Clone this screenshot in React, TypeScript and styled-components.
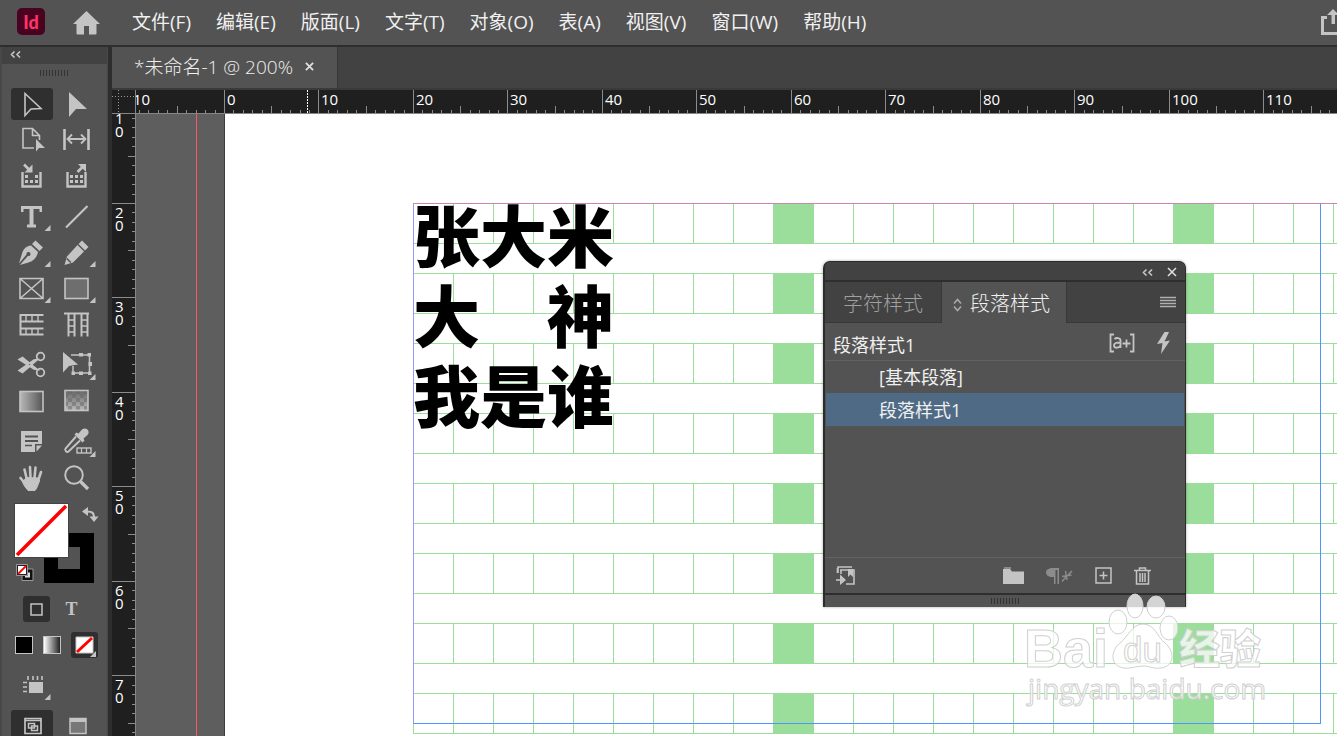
import React, { useEffect, useState } from "react";
import styled, { createGlobalStyle } from "styled-components";

const LATIN = `"Open Sans", "Noto Sans CJK SC", sans-serif`;
const INK = "#c4c4c4";
const GREEN = "#9bdd9b";

const GlobalStyle = createGlobalStyle`
  * { box-sizing: border-box; }
  body { margin: 0; background: #535353; font-family: ${LATIN}; color: #f0f0f0; }
  button { margin: 0; padding: 0; border: 0; background: none; color: inherit; font: inherit; }
  svg { display: block; flex: none; }
`;

const Shell = styled.div`
  display: flex;
  flex-direction: column;
  height: 100vh;
  overflow: hidden;
`;

/* ---------- menu bar ---------- */
const MenuBar = styled.header`
  display: flex;
  align-items: center;
  flex: none;
  height: 45px;
  padding: 0 0 2px 17px;
  overflow: hidden;
`;
const AppLogo = styled.div`
  display: flex;
  align-items: center;
  justify-content: center;
  width: 28px;
  height: 27px;
  border-radius: 5px;
  background: #49021f;
  color: #ff3366;
  font: 900 18px/24px Lato, sans-serif;
  flex: none;
`;
const HomeButton = styled.button`
  margin: 2px 20px 0 28px;
`;
const MenuList = styled.nav`
  display: flex;
`;
const MenuItem = styled.button`
  padding: 0 13px 0 12px;
  font-size: 19px;
  line-height: 28px;
  white-space: nowrap;
`;
const ShareButton = styled.button`
  margin-left: auto;
`;

/* ---------- tool bar ---------- */
const Body = styled.div`
  display: flex;
  flex: 1;
  min-height: 0;
  border-top: 2px solid #2e2e2e;
`;
const ToolBar = styled.aside`
  flex: none;
  width: 108px;
  border-left: 2px solid #484848;
  border-right: 1px solid #484848;
  background: #535353;
  overflow: hidden;
`;
const ToolHeader = styled.button`
  display: flex;
  align-items: center;
  width: 100%;
  height: 17px;
  padding: 0 0 2px 8px;
  background: #424242;
`;
const Grip = styled.div<{ $h: number }>`
  display: flex;
  align-items: center;
  justify-content: center;
  height: ${(p) => p.$h}px;
  &::before {
    content: "";
    width: 29px;
    height: 6px;
    background: repeating-linear-gradient(to right, #333 0 1px, transparent 1px 3px);
  }
`;
const ToolGroups = styled.div`
  display: flex;
  flex-direction: column;
  gap: 9px;
  padding: 7px 9px 0;
`;
const ToolGroup = styled.div`
  display: grid;
  grid-template-columns: 42px 42px;
  gap: 4px 3px;
`;
const ToolButton = styled.button<{ $on?: boolean }>`
  width: 42px;
  height: 32px;
  border-radius: 3px;
  background: ${(p) => (p.$on ? "#2f2f2f" : "transparent")};
`;

const Swatches = styled.div`
  position: relative;
  height: 94px;
`;
const StrokeSwatch = styled.button`
  position: absolute;
  left: 42px;
  top: 38px;
  width: 50px;
  height: 50px;
  border: 14px solid #000;
  background: #535353;
`;
const FillSwatch = styled.button`
  position: absolute;
  left: 12px;
  top: 8px;
  width: 55px;
  height: 55px;
  border: 1px solid #444;
  background: #fff;
`;
const SwapButton = styled.button`
  position: absolute;
  left: 80px;
  top: 11px;
`;
const DefaultsButton = styled.button`
  position: absolute;
  left: 14px;
  top: 69px;
`;
const SwatchRow = styled.div<{ $pad: number; $gap: number; $top: number }>`
  display: flex;
  align-items: center;
  gap: ${(p) => p.$gap}px;
  padding: ${(p) => p.$top}px 0 0 ${(p) => p.$pad}px;
`;
const SmallButton = styled.button<{ $on?: boolean }>`
  display: flex;
  align-items: center;
  justify-content: center;
  width: 27px;
  height: 26px;
  border-radius: 3px;
  background: ${(p) => (p.$on ? "#2f2f2f" : "transparent")};
  color: ${INK};
  font: 700 18px/26px "Liberation Serif", serif;
`;
const ColorChip = styled.button<{ $bg: string }>`
  width: 18px;
  height: 18px;
  border: 1px solid ${INK};
  background: ${(p) => p.$bg};
`;

/* ---------- document area ---------- */
const DocumentArea = styled.main`
  display: flex;
  flex-direction: column;
  flex: 1;
  min-width: 0;
  border-left: 4px solid #2e2e2e;
`;
const TabStrip = styled.div`
  display: flex;
  flex: none;
  height: 43px;
  background: #424242;
  border-bottom: 2px solid #3a3a3a;
`;
const DocTab = styled.div`
  display: flex;
  align-items: center;
  gap: 12px;
  padding: 0 23px 3px 22px;
  border-right: 1px solid #383838;
  background: #535353;
  font-size: 19px;
  font-weight: 300;
  white-space: nowrap;
`;
const Workspace = styled.div`
  display: grid;
  grid-template-columns: 24px minmax(0, 1fr);
  grid-template-rows: 24px minmax(0, 1fr);
  flex: 1;
  min-height: 0;
`;
const RulerBox = styled.div<{ $side?: boolean }>`
  background: #1f1f1f;
  overflow: hidden;
  border-bottom: ${(p) => (p.$side ? 0 : 1)}px solid #868686;
  border-right: ${(p) => (p.$side ? 1 : 0)}px solid #868686;
  svg text { font: 15px "Open Sans", sans-serif; fill: #fff; }
`;
const Corner = styled.div`
  background: #1f1f1f;
  border-right: 1px solid #868686;
  border-bottom: 1px solid #868686;
`;
const Canvas = styled.div`
  position: relative;
  display: flex;
  overflow: hidden;
  background: #5e5e5e;
`;
const Pasteboard = styled.div`
  flex: none;
  width: 89px;
  padding-left: 60px;
  border-right: 1px solid #3c3c3c;
  &::before { content: ""; display: block; width: 1px; height: 100%; background: #ff5266; }
`;
const Page = styled.div`
  flex: 1;
  min-width: 0;
  padding: 89px 0 0 188px;
  background: #fff;
  overflow: hidden;
`;
/* The text frame stacks its character grid, margin guides and story. */
const Frame = styled.div`
  display: grid;
  grid-template-columns: minmax(0, 1fr);
  & > * { grid-area: 1 / 1; }
`;
const CharGrid = styled.div`
  display: flex;
  flex-direction: column;
  gap: 29px;
`;
const CharRow = styled.div`
  height: 41px;
  border: solid ${GREEN};
  border-width: 1px 0 1px 1px;
  background:
    repeating-linear-gradient(to right, transparent 0 359px, ${GREEN} 359px 400px),
    repeating-linear-gradient(to right, transparent 0 39px, ${GREEN} 39px 40px);
`;
const Guides = styled.div`
  width: 908px;
  height: 521px;
  border: 1px solid #4d94ff;
  border-top-color: #cc85ad;
  border-left-color: #9999f5;
`;
const TopGuide = styled.div`
  height: 1px;
  background: #cc85ad;
`;
const Story = styled.div`
  color: #000;
  font: 900 67px/80px "Noto Sans CJK SC", sans-serif;
  white-space: pre;
  margin-top: -10px;
  p { margin: 0; }
`;

/* ---------- floating panel ---------- */
const Panel = styled.section`
  position: absolute;
  left: 687px;
  top: 147px;
  width: 363px;
  border: solid #2c2c2c;
  border-width: 1px 1px 0 2px;
  border-radius: 7px 7px 0 0;
  background: #535353;
  box-shadow: 0 0 3px rgba(0, 0, 0, 0.35);
  overflow: hidden;
`;
const PanelTop = styled.div`
  display: flex;
  align-items: center;
  justify-content: flex-end;
  gap: 14px;
  height: 20px;
  padding-right: 8px;
  padding-top: 2px;
  border-bottom: 2px solid #2e2e2e;
  background: #424242;
`;
const PanelTabs = styled.div`
  display: flex;
  height: 41px;
  background: #424242;
`;
const PanelTab = styled.button<{ $on?: boolean }>`
  display: flex;
  align-items: center;
  gap: 8px;
  padding: ${(p) => (p.$on ? "0 16px 0 11px" : "0 18px 0 18px")};
  background: ${(p) => (p.$on ? "#535353" : "#424242")};
  border-right: 1px solid #383838;
  border-bottom: ${(p) => (p.$on ? 0 : 1)}px solid #383838;
  color: ${(p) => (p.$on ? "#f0f0f0" : "#a0a0a0")};
  font-size: 20px;
  font-weight: 300;
  white-space: nowrap;
  svg { margin-top: 4px; }
`;
const PanelMenu = styled.button`
  display: flex;
  flex: 1;
  align-items: center;
  justify-content: flex-end;
  padding-right: 9px;
  border-bottom: 1px solid #383838;
`;
const CurrentStyle = styled.div`
  display: flex;
  align-items: center;
  gap: 21px;
  height: 38px;
  padding: 2px 14px 0 8px;
  border-bottom: 1px solid #626262;
  font-size: 18px;
  span { flex: 1; padding-top: 2px; }
`;
const StyleList = styled.div`
  height: 196px;
  padding: 0 1px;
`;
const StyleRow = styled.button<{ $on?: boolean }>`
  display: block;
  width: 100%;
  height: 32px;
  padding-left: 53px;
  background: ${(p) => (p.$on ? "#4e6a85" : "transparent")};
  font-size: 18px;
  line-height: 33px;
  text-align: left;
  & + & { height: 33px; line-height: 35px; }
`;
const PanelFooter = styled.footer`
  display: flex;
  align-items: center;
  height: 38px;
  padding: 0 34px 0 10px;
  border-top: 1px solid #626262;
  border-bottom: 2px solid #2e2e2e;
  gap: 22px;
  button:first-child { margin-right: auto; }
`;

const Watermark = styled.div`
  position: absolute;
  right: 66px;
  bottom: 22px;
  svg text { fill: #fff; fill-opacity: 0.75; stroke: #d0d0d0; stroke-width: 1; }
`;

/* ---------- drawings ---------- */
type ToolProps = { label: string; on?: boolean; more?: boolean; children: React.ReactNode };
const Tool = ({ label, on, more, children }: ToolProps) => (
  <ToolButton $on={on} aria-label={label} title={label}>
    <svg width="42" height="32" viewBox="0 0 42 32" fill="none" stroke={INK} strokeWidth="2">
      {children}
      {more && <path d="M39.500 24v6h-6z" fill={INK} stroke="none" />}
    </svg>
  </ToolButton>
);

const Chevrons = () => (
  <svg width="11" height="7" viewBox="0 0 11 7" fill="none" stroke={INK} strokeWidth="1.6">
    <path d="M4.500 .5l-3 3 3 3M10 .5l-3 3 3 3" />
  </svg>
);

const Cross = ({ size, weight = 2 }: { size: number; weight?: number }) => (
  <svg width={size} height={size} viewBox="0 0 10 10" stroke="#e0e0e0" strokeWidth={weight}>
    <path d="M1 1l8 8M9 1l-8 8" />
  </svg>
);

const dots = (cols: number[], y: number) =>
  cols.map((x) => <rect key={`${x}-${y}`} x={x} y={y} width="3" height="3" fill={INK} stroke="none" />);

const PX_PER_MM = 9.448;

const useWindowSize = () => {
  const read = () => ({ width: window.innerWidth, height: window.innerHeight });
  const [size, setSize] = useState(read);
  useEffect(() => {
    const update = () => setSize(read());
    window.addEventListener("resize", update);
    return () => window.removeEventListener("resize", update);
  }, []);
  return size;
};

const HorizontalRuler = () => {
  const { width } = useWindowSize();
  const at = (mm: number) => Math.round(88 + mm * PX_PER_MM);
  const visible = Math.max(0, width - 136);
  const ticks = Array.from({ length: Math.ceil(visible / PX_PER_MM) + 1 }, (_, i) => i - 10).filter((mm) => at(mm) < visible);
  return (
    <svg width="100%" height="23" shapeRendering="crispEdges">
      {ticks.map((mm) => (
        <rect key={mm} x={at(mm)} y={mm % 10 === 0 ? 0 : mm % 5 === 0 ? 16 : 20} width="1" height="23" fill="#8c8c8c" />
      ))}
      {ticks.filter((mm) => mm % 10 === 0).map((mm) => (
        <text key={mm} x={at(mm) + 3} y="15">{Math.abs(mm)}</text>
      ))}
      <path d="M171.500 0v23" stroke="#fff" strokeDasharray="2 1" />
    </svg>
  );
};

const VerticalRuler = () => {
  const { height } = useWindowSize();
  const at = (mm: number) => Math.round(89 + (mm - 20) * PX_PER_MM);
  const visible = Math.max(0, height - 114);
  const ticks = Array.from({ length: Math.ceil(visible / PX_PER_MM) + 1 }, (_, i) => i + 10).filter((mm) => at(mm) < visible);
  return (
    <svg width="23" height="100%" shapeRendering="crispEdges">
      {ticks.map((mm) => (
        <rect key={mm} x={mm % 10 === 0 ? 0 : mm % 5 === 0 ? 16 : 20} y={at(mm)} width="23" height="1" fill="#8c8c8c" />
      ))}
      {ticks.filter((mm) => mm % 10 === 0).map((mm) =>
        String(mm).split("").map((d, i) => (
          <text key={`${mm}-${i}`} x="3" y={at(mm) + 15 + i * 13}>{d}</text>
        ))
      )}
    </svg>
  );
};

const Tools = () => (
  <ToolGroups>
    <ToolGroup>
      <Tool label="选择工具" on><path d="M14 5.500v22l6-6.500 10-.5z" strokeWidth="1.600" /></Tool>
      <Tool label="直接选择工具"><path d="M13 4v25l7-8h11z" fill={INK} stroke="none" /></Tool>
      <Tool label="页面工具">
        <path d="M23 24H12V4.500h9.500l7 7V16M21.500 4.500v7h7" strokeWidth="1.600" />
        <path d="M25 15v12.500l3-3.500h6z" fill={INK} stroke="none" />
      </Tool>
      <Tool label="间隙工具">
        <path d="M8.500 5v21M32.500 5v21" strokeWidth="2.600" />
        <path d="M13 15h15M16 10.500L11.500 15l4.500 4.500M25 10.500l4.500 4.500-4.500 4.500" strokeWidth="1.800" />
      </Tool>
      <Tool label="内容收集器工具">
        <path d="M11.500 12v14.500h18V12" strokeWidth="2.400" />
        <path d="M13 4.500l5 5" strokeWidth="2.600" /><path d="M21.500 4.500v8h-8z" fill={INK} stroke="none" />
        {dots([14, 24], 15)}{dots([14, 19, 24], 20)}
      </Tool>
      <Tool label="内容置入器工具">
        <path d="M11.500 12v14.500h18V12" strokeWidth="2.400" />
        <path d="M21.500 12l5-5" strokeWidth="2.600" /><path d="M22 4h8v8z" fill={INK} stroke="none" />
        {dots([14, 19, 24], 15)}{dots([14, 19, 24], 20)}
      </Tool>
    </ToolGroup>
    <ToolGroup>
      <Tool label="文字工具" more>
        <path d="M10 5h21v6h-2.500V8H22.500v15.500H25V26.500h-9V23.500h2.500V8H12.500v3H10z" fill={INK} stroke="none" />
      </Tool>
      <Tool label="直线工具"><path d="M10 26.500L31.500 5" strokeWidth="2.200" /></Tool>
      <Tool label="钢笔工具" more>
        <path d="M24.500 3.500l7.500 7-3.500 3.500-7.500-7z" fill={INK} stroke="none" />
        <path d="M20 8.500l7 6.500c-1 5-4 9-9.500 10.500L9 28c0-.500 8-9 8-9a2 2 0 1 0-1.500-1.500L8 26.500l3-10c1.500-5 4.500-7.500 9-8z" fill={INK} stroke="none" />
      </Tool>
      <Tool label="铅笔工具" more>
        <path d="M26 3.500l6.500 6.500-3.500 3.500-6.500-6.500z" fill={INK} stroke="none" />
        <path d="M21.500 8l6.500 6.500L17 25.500l-8.500 2.500L11 19.500z" fill={INK} stroke="none" />
        <path d="M10.800 21.500l4 4" stroke="#535353" strokeWidth="1.500" />
      </Tool>
      <Tool label="矩形框架工具" more>
        <path d="M9 5.500h23v20H9zM9 5.500l23 20M32 5.500l-23 20" strokeWidth="1.600" />
      </Tool>
      <Tool label="矩形工具" more><rect x="9" y="5.500" width="23" height="20" fill="#6e6e6e" strokeWidth="1.600" /></Tool>
      <Tool label="水平网格工具">
        <path d="M9.500 5v21M8.500 6h24M8.500 12.500h24M8.500 19.500h24M8.500 25.500h24" />
        <path d="M15 6v6M21 6v6M27 6v6M15 19v6M21 19v6M27 19v6" strokeWidth="1.400" />
      </Tool>
      <Tool label="垂直网格工具">
        <path d="M8 4.500h25M12.500 4v23.500M18.500 4v23.500M25.500 4v23.500M31.500 4v23.500" />
        <path d="M12 11h6M12 17h6M12 23h6M25 11h6M25 17h6M25 23h6" strokeWidth="1.400" />
      </Tool>
    </ToolGroup>
    <ToolGroup>
      <Tool label="剪刀工具">
        <circle cx="29.500" cy="6.500" r="3.800" strokeWidth="1.800" /><circle cx="29.500" cy="22.500" r="3.800" strokeWidth="1.800" />
        <path d="M8 9.500l3.500-2L26.500 19.500L23 19zM8 20.500l3.500 2L26.500 9.500L23 10z" fill={INK} strokeWidth="1.500" />
      </Tool>
      <Tool label="自由变换工具" more>
        <path d="M15 5h18.500v18H17V16" strokeWidth="1.500" />
        <path d="M23 3h4v3.500h-4zM31.500 3H35v3.500h-3.500zM32.500 12H36v4h-3.500zM32 21.500h3.500V25H32zM23 21.500h4V25h-4zM15.500 21.500H19V25h-3.500z" fill={INK} stroke="none" />
        <path d="M7 2v20.500l6-6.500 9-1.500z" fill={INK} stroke="none" />
      </Tool>
      <Tool label="渐变色板工具">
        <defs><linearGradient id="toolGradient"><stop stopColor="#b8b8b8" /><stop offset="1" stopColor="#555" /></linearGradient></defs>
        <rect x="9" y="5.500" width="23" height="20" fill="url(#toolGradient)" strokeWidth="1.600" />
      </Tool>
      <Tool label="渐变羽化工具">
        <defs>
          <linearGradient id="feather" x2="0" y2="1"><stop stopColor="#666" /><stop offset="1" stopColor="#bbb" /></linearGradient>
          <pattern id="checks" width="8" height="8" patternUnits="userSpaceOnUse"><path d="M0 0h4v4H0zM4 4h4v4H4z" fill="#666" fillOpacity=".5" stroke="none" /></pattern>
        </defs>
        <rect x="9" y="4.500" width="23" height="20" fill="url(#feather)" strokeWidth="1.600" />
        <rect x="10" y="5.500" width="21" height="18" fill="url(#checks)" stroke="none" />
      </Tool>
    </ToolGroup>
    <ToolGroup>
      <Tool label="附注工具">
        <path d="M10 4h21v13h-7v8H10z" fill={INK} stroke="none" /><path d="M25.500 18.500H31L25.500 24.500z" fill={INK} stroke="none" />
        <path d="M14 9.500h13M14 14h13" stroke="#535353" />
        <path d="M14 18.500h7" stroke="#535353" strokeWidth="1.500" />
      </Tool>
      <Tool label="吸管工具" more>
        <path d="M20 9.500l-10.500 12c-1 1.500 1 4.500 3 3L24 13.500" strokeWidth="1.900" />
        <path d="M18.500 7.500l2-2 2 1L26 2.500c1.500-1.500 4-1.500 5.500 0s1.500 4 0 5.500L27.500 11.500l1 2-2 2z" fill={INK} stroke="none" />
        <rect x="21" y="21" width="14" height="5" strokeWidth="1.400" /><path d="M25.500 21v5M30.500 21v5" strokeWidth="1.200" />
      </Tool>
      <Tool label="抓手工具">
        <path d="M16 17L13.500 6.500M19.500 15l-.5-11M23.500 15l1-10.500M27 18l3-9M14.500 21L9.500 15" strokeWidth="2.600" strokeLinecap="round" />
        <path d="M15.500 14.500l12 .500 1 3-3 7.500-1.500 2h-7L13.500 23l-2-4z" fill={INK} stroke={INK} strokeLinejoin="round" strokeWidth="1" />
      </Tool>
      <Tool label="缩放显示工具">
        <circle cx="18" cy="12" r="8.800" strokeWidth="1.900" /><path d="M24.500 18.500l7.500 7.500" strokeWidth="3.400" />
      </Tool>
    </ToolGroup>
  </ToolGroups>
);

const Baidu = () => (
  <Watermark>
    <svg width="250" height="122" viewBox="0 0 250 122">
      <g fill="#fff" fillOpacity=".75" stroke="#d0d0d0">
        <ellipse cx="97" cy="30" rx="9" ry="12" /><ellipse cx="114" cy="14" rx="8" ry="12" />
        <ellipse cx="135" cy="15" rx="9" ry="11" /><ellipse cx="148" cy="36" rx="9" ry="12" />
        <path d="M122 32c12 0 14 13 22 19 9 7 11 23-4 25-8 1-11-2-18-2s-12 3-19 2c-15-2-13-18-4-25 8-6 12-19 23-19z" />
      </g>
      <text x="3" y="75" fontFamily="Liberation Sans" fontWeight="700" fontSize="54">Bai</text>
      <text x="102" y="70" fontFamily="Liberation Sans" fontSize="35">du</text>
      <text x="158" y="72" fontFamily="Noto Sans CJK SC" fontWeight="900" fontSize="41">经验</text>
      <text x="7" y="107" fontFamily="Open Sans" fontSize="28">jingyan.baidu.com</text>
    </svg>
  </Watermark>
);

const MENUS = ["文件(F)", "编辑(E)", "版面(L)", "文字(T)", "对象(O)", "表(A)", "视图(V)", "窗口(W)", "帮助(H)"];
const STORY = ["张大米", "大　神", "我是谁"];
const STYLES = ["[基本段落]", "段落样式1"];

const StylesPanel = () => (
  <Panel aria-label="段落样式">
    <PanelTop>
      <button aria-label="折叠"><Chevrons /></button>
      <button aria-label="关闭"><Cross size={10} weight={1.5} /></button>
    </PanelTop>
    <PanelTabs>
      <PanelTab>字符样式</PanelTab>
      <PanelTab $on>
        <svg width="9" height="14" viewBox="0 0 9 14" fill="none" stroke="#aaa" strokeWidth="1.600"><path d="M1 5.500l3.500-4 3.500 4M1 8.500l3.500 4 3.500-4" /></svg>
        段落样式
      </PanelTab>
      <PanelMenu aria-label="面板菜单">
        <svg width="16" height="12" viewBox="0 0 16 12" stroke="#b0b0b0" strokeWidth="1.400"><path d="M0 1.500h16M0 4.500h16M0 7.500h16M0 10.500h16" /></svg>
      </PanelMenu>
    </PanelTabs>
    <CurrentStyle>
      <span>段落样式1</span>
      <button aria-label="突出显示覆盖">
        <svg width="26" height="20" viewBox="0 0 26 20" fill="none" stroke={INK} strokeWidth="1.800">
          <path d="M5 1.500H1.500v17H5M21 1.500h3.500v17H21" />
          <path d="M5.500 6c1.500-1.500 6-1.500 6 1.500V15M11.500 9.500c-3 0-6.500 0-6.500 3s4.500 3 6.500 0M13.500 10.500h8M17.500 6.500v8" />
        </svg>
      </button>
      <button aria-label="快速应用">
        <svg width="15" height="22" viewBox="0 0 15 22" fill={INK}><path d="M8.500 0L1 12l5.500-1L5 22l9-13.500-5.500 1L13 0z" /></svg>
      </button>
    </CurrentStyle>
    <StyleList>
      {STYLES.map((name) => <StyleRow key={name} $on={name === "段落样式1"}>{name}</StyleRow>)}
    </StyleList>
    <PanelFooter>
      <button aria-label="载入样式">
        <svg width="21" height="20" viewBox="0 0 21 20" fill="none" stroke={INK} strokeWidth="1.600">
          <path d="M3 7V1h14M6 8V4M5 4h14v14h-8M2.500 2v5" /><path d="M13 3h5v8l-2.500-2.500L13 11zM5 8.500l6 5.500-6 5z" fill={INK} stroke="none" /><path d="M1 14h6" />
        </svg>
      </button>
      <button aria-label="创建新样式组">
        <svg width="21" height="17" viewBox="0 0 21 17" fill={INK}><path d="M0 2h7l2 2.500H0zM0 4.500h21V17H0zM1 .5h7v1H1z" /></svg>
      </button>
      <button aria-label="清除覆盖">
        <svg width="27" height="18" viewBox="0 0 27 18" fill="#8c8c8c"><path d="M13 1v16h-1.500V3H9.500v14H8V10C3 10.500 0 8.500 0 5.500S3 1 7 1z" /><path d="M26 4l-4 4M20 10l-4 4.500M19.500 4l1.500 9M16 9.500l9.500-1.500" stroke="#8c8c8c" strokeWidth="1.500" /></svg>
      </button>
      <button aria-label="创建新样式">
        <svg width="17" height="17" viewBox="0 0 17 17" fill="none" stroke={INK} strokeWidth="1.500"><path d="M1 1h15v15H1zM8.500 4.500v8M4.500 8.500h8" /></svg>
      </button>
      <button aria-label="删除">
        <svg width="17" height="18" viewBox="0 0 17 18" fill="none" stroke={INK} strokeWidth="1.500"><path d="M0 3.500h17M5.500 3V1h6v2M2.500 4v13h12V4M6 6v9M8.500 6v9M11 6v9" /></svg>
      </button>
    </PanelFooter>
    <Grip $h={12} />
  </Panel>
);

export default function App() {
  return (
    <Shell>
      <GlobalStyle />
      <MenuBar>
        <AppLogo>Id</AppLogo>
        <HomeButton aria-label="主页">
          <svg width="27" height="24" viewBox="0 0 27 24" fill={INK}><path d="M13.500 0L27 13h-3.500v9.500a1 1 0 0 1-1 1H16V15h-5v8.500H4.500a1 1 0 0 1-1-1V13H0z" /></svg>
        </HomeButton>
        <MenuList>{MENUS.map((m) => <MenuItem key={m}>{m}</MenuItem>)}</MenuList>
        <ShareButton aria-label="共享">
          <svg width="16" height="26" viewBox="0 0 16 26" fill={INK}><path d="M0 7h6v3H3v13h13v3H0zM12 0l6 6h-4v9h-3.500V6H6z" /></svg>
        </ShareButton>
      </MenuBar>
      <Body>
        <ToolBar>
          <ToolHeader aria-label="折叠工具栏"><Chevrons /></ToolHeader>
          <Grip $h={17} />
          <Tools />
          <Swatches>
            <StrokeSwatch aria-label="描边" />
            <FillSwatch aria-label="填色">
              <svg width="53" height="53" viewBox="0 0 53 53"><path d="M2 51L51 2" stroke="#f00" strokeWidth="3.500" /></svg>
            </FillSwatch>
            <SwapButton aria-label="互换填色和描边">
              <svg width="18" height="17" viewBox="0 0 18 17" fill={INK}><path d="M5 5.500c6 0 7 2 7 6" fill="none" stroke={INK} strokeWidth="2.200" /><path d="M0 5.500L6 1v9zM7.500 10.500h9L12 16z" /></svg>
            </SwapButton>
            <DefaultsButton aria-label="默认填色和描边">
              <svg width="18" height="18" viewBox="0 0 18 18"><path d="M6 5h11v11.500H6z" fill="#111" stroke="#999" /><path d="M9 12.500h4v-4" fill="none" stroke="#ddd" strokeWidth="2" /><path d="M.5.500h11v11H.5z" fill="#222" stroke="#999" /><path d="M2 2h8v8H2z" fill="#fff" /><path d="M2 10l8-8" stroke="#f00" strokeWidth="1.800" /></svg>
            </DefaultsButton>
          </Swatches>
          <SwatchRow $pad={21} $gap={8} $top={7}>
            <SmallButton $on aria-label="格式针对容器">
              <svg width="13" height="13" viewBox="0 0 13 13" fill="none" stroke={INK} strokeWidth="1.500"><path d="M1 1h11v11H1z" /></svg>
            </SmallButton>
            <SmallButton aria-label="格式针对文本">T</SmallButton>
          </SwatchRow>
          <SwatchRow $pad={13} $gap={10} $top={10}>
            <ColorChip $bg="#000" aria-label="应用颜色" />
            <ColorChip $bg="linear-gradient(to right, #fff, #222)" aria-label="应用渐变" />
            <SmallButton $on aria-label="应用无">
              <svg width="27" height="26" viewBox="0 0 27 26"><path d="M5 5h17v16H5z" fill="#fff" stroke={INK} /><path d="M6 20L21 6" stroke="#f00" strokeWidth="3" /><path d="M25 19v6h-6z" fill={INK} /></svg>
            </SmallButton>
          </SwatchRow>
          <SwatchRow $pad={9} $gap={3} $top={12}>
            <Tool label="视图选项" more>
              <path d="M18 12h14v11H18z" fill={INK} stroke="none" />
              <path d="M17 6v4M22 6v4M26.500 6v4M31 6v4M12 12.500h4M12 17h4M12 21.500h4" strokeWidth="1.600" />
            </Tool>
          </SwatchRow>
          <SwatchRow $pad={9} $gap={3} $top={8}>
            <Tool label="正常" on>
              <path d="M14 8.500h16v15H14zM14 10.500h16" strokeWidth="1.700" /><path d="M17.500 13.500h6v4.500h-6zM20.500 16h6v4.500h-6z" strokeWidth="1.500" />
            </Tool>
            <Tool label="预览">
              <path d="M14 8.500h16v15H14z" fill="#777" strokeWidth="1.500" /><path d="M14 10.500h16" strokeWidth="3" />
            </Tool>
          </SwatchRow>
        </ToolBar>
        <DocumentArea>
          <TabStrip>
            <DocTab>
              *未命名-1 @ 200%
              <button aria-label="关闭文档"><Cross size={9} /></button>
            </DocTab>
          </TabStrip>
          <Workspace>
            <Corner>
              <svg width="23" height="23" stroke="#9a9a9a" strokeDasharray="1 2" shapeRendering="crispEdges"><path d="M6.500 0v23M0 6.500h23" /></svg>
            </Corner>
            <RulerBox><HorizontalRuler /></RulerBox>
            <RulerBox $side><VerticalRuler /></RulerBox>
            <Canvas>
              <Pasteboard />
              <Page>
                <Frame>
                  <CharGrid>{Array.from({ length: 8 }, (_, i) => <CharRow key={i} />)}</CharGrid>
                  <TopGuide />
                  <Guides />
                  <Story>{STORY.map((line) => <p key={line}>{line}</p>)}</Story>
                </Frame>
              </Page>
              <StylesPanel />
              <Baidu />
            </Canvas>
          </Workspace>
        </DocumentArea>
      </Body>
    </Shell>
  );
}
